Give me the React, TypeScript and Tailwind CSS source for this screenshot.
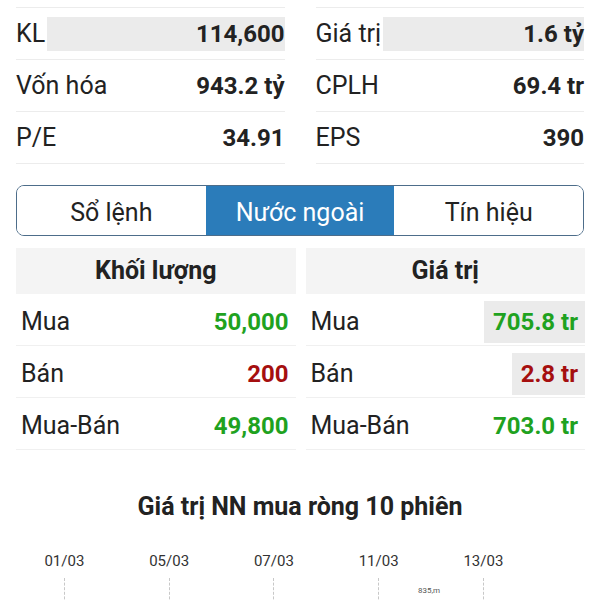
import React from "react";

const topRows = [
  { l: "KL", v: "114,600", r: "Giá trị", rv: "1.6 tỷ", flash: true },
  { l: "Vốn hóa", v: "943.2 tỷ", r: "CPLH", rv: "69.4 tr" },
  { l: "P/E", v: "34.91", r: "EPS", rv: "390" },
];

const tabs = ["Sổ lệnh", "Nước ngoài", "Tín hiệu"];

const volRows = [
  { l: "Mua", v: "50,000", c: "text-[#1fa21f]" },
  { l: "Bán", v: "200", c: "text-[#a50f0f]" },
  { l: "Mua-Bán", v: "49,800", c: "text-[#1fa21f]" },
];

const valRows = [
  { l: "Mua", v: "705.8 tr", c: "text-[#1fa21f]", flash: true },
  { l: "Bán", v: "2.8 tr", c: "text-[#a50f0f]", flash: true },
  { l: "Mua-Bán", v: "703.0 tr", c: "text-[#1fa21f]" },
];

const dates = ["01/03", "05/03", "07/03", "11/03", "13/03"];

function StatCell({ label, value, flash }: { label: string; value: string; flash?: boolean }) {
  return (
    <div className="flex h-[52px] items-center border-b border-[#ececec]">
      <span className="text-[25px] text-[#222] whitespace-nowrap">{label}</span>
      <div className={`ml-[2px] flex h-[34px] flex-1 items-center justify-end ${flash ? "bg-[#ebebeb]" : ""}`}>
        <span className="text-[24px] font-bold text-[#222] whitespace-nowrap">{value}</span>
      </div>
    </div>
  );
}

function FlowTable({ title, rows }: { title: string; rows: any[] }) {
  return (
    <div className="flex flex-col">
      <div className="flex h-[46px] items-center justify-center bg-[#f4f4f4] text-[25px] font-bold text-[#222]">{title}</div>
      {rows.map((r) => (
        <div key={r.l} className="flex h-[52px] items-center justify-between border-b border-[#f0f0f0] pl-[5px] pt-[4px]">
          <span className="text-[25px] text-[#222]">{r.l}</span>
          <span className={`flex h-[42px] items-center pl-[9px] pr-[7px] text-[24px] font-bold ${r.c} ${r.flash ? "bg-[#ebebeb]" : ""}`}>
            {r.v}
          </span>
        </div>
      ))}
    </div>
  );
}

export default function App() {
  return (
    <div className="h-[600px] w-[600px] overflow-hidden bg-white font-['Roboto',sans-serif]">
      {/* stats */}
      <div className="grid grid-cols-2 gap-x-[31px] px-[16px]">
        <div className="h-[8px] border-b border-[#ececec]" />
        <div className="h-[8px] border-b border-[#ececec]" />
        {topRows.map((r) => (
          <React.Fragment key={r.l}>
            <StatCell label={r.l} value={r.v} flash={r.flash} />
            <StatCell label={r.r} value={r.rv} flash={r.flash} />
          </React.Fragment>
        ))}
      </div>

      {/* tabs */}
      <div className="mx-[16px] mt-[21px] flex h-[51px] overflow-hidden rounded-[8px] border border-[#4d6d8a]">
        {tabs.map((t, i) => (
          <div
            key={t}
            className={`flex flex-1 items-center justify-center pt-[4px] text-[25px] ${
              i === 1 ? "bg-[#2b7cba] text-white" : "bg-white text-[#222]"
            }`}
          >
            {t}
          </div>
        ))}
      </div>

      {/* foreign flow */}
      <div className="mt-[12px] grid grid-cols-2 gap-x-[10px] pl-[16px] pr-[15px]">
        <FlowTable title="Khối lượng" rows={volRows} />
        <FlowTable title="Giá trị" rows={valRows} />
      </div>

      <div className="mt-[38px] text-center text-[25px] font-bold text-[#222]">Giá trị NN mua ròng 10 phiên</div>

      {/* chart */}
      <div className="relative mt-[24px] h-[80px] px-[12px]">
        <div className="flex">
          {dates.map((d) => (
            <div key={d} className="flex w-[104.75px] flex-col items-center">
              <span className="text-[15px] text-[#333]">{d}</span>
              <div className="mt-[6px] h-[26px] border-l border-dashed border-[#c8c8c8]" />
            </div>
          ))}
        </div>
        <span className="absolute left-[418px] top-[36px] text-[8px] leading-[10px] text-[#555]">835,m</span>
      </div>
    </div>
  );
}
